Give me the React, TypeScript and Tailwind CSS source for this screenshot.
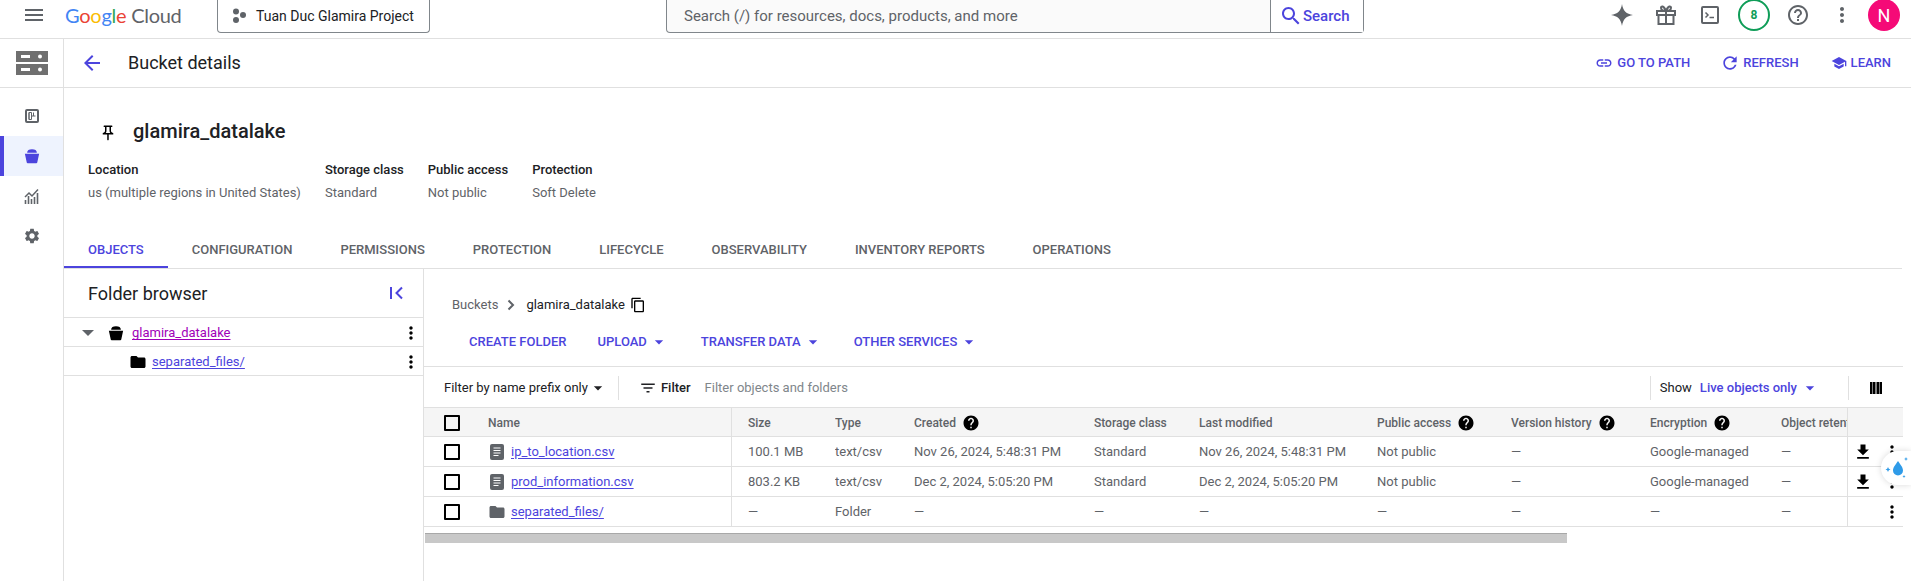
import type { ReactNode } from 'react'

const P = {
  menu: 'M3 18h18v-2H3v2zm0-5h18v-2H3v2zm0-7v2h18V6H3z',
  back: 'M20 11H7.83l5.59-5.59L12 4l-8 8 8 8 1.41-1.41L7.83 13H20v-2z',
  link: 'M3.9 12c0-1.71 1.39-3.1 3.1-3.1h4V7H7c-2.76 0-5 2.24-5 5s2.24 5 5 5h4v-1.9H7c-1.71 0-3.1-1.39-3.1-3.1zM8 13h8v-2H8v2zm9-6h-4v1.9h4c1.71 0 3.1 1.39 3.1 3.1s-1.39 3.1-3.1 3.1h-4V17h4c2.76 0 5-2.24 5-5s-2.24-5-5-5z',
  refresh: 'M17.65 6.35C16.2 4.9 14.21 4 12 4c-4.42 0-7.99 3.58-7.99 8s3.57 8 7.99 8c3.73 0 6.84-2.55 7.73-6h-2.08c-.82 2.33-3.04 4-5.65 4-3.31 0-6-2.69-6-6s2.69-6 6-6c1.66 0 3.14.69 4.22 1.78L13 11h7V4l-2.35 2.35z',
  school: 'M5 13.18v4L12 21l7-3.82v-4L12 17l-7-3.82zM12 3L1 9l11 6 9-4.91V17h2V9L12 3z',
  search: 'M15.5 14h-.79l-.28-.27C15.41 12.59 16 11.11 16 9.5 16 5.91 13.09 3 9.5 3S3 5.91 3 9.5 5.91 16 9.5 16c1.61 0 3.09-.59 4.23-1.57l.27.28v.79l5 4.99L20.49 19l-4.99-5zm-6 0C7.01 14 5 11.99 5 9.5S7.01 5 9.5 5 14 7.01 14 9.5 11.99 14 9.5 14z',
  helpOutline: 'M11 18h2v-2h-2v2zm1-16C6.48 2 2 6.48 2 12s4.48 10 10 10 10-4.48 10-10S17.52 2 12 2zm0 18c-4.41 0-8-3.59-8-8s3.59-8 8-8 8 3.59 8 8-3.59 8-8 8zm0-14c-2.21 0-4 1.79-4 4h2c0-1.1.9-2 2-2s2 .9 2 2c0 2-3 1.75-3 5h2c0-2.25 3-2.5 3-5 0-2.21-1.79-4-4-4z',
  help: 'M12 2C6.48 2 2 6.48 2 12s4.48 10 10 10 10-4.48 10-10S17.52 2 12 2zm1 17h-2v-2h2v2zm2.07-7.75l-.9.92C13.45 12.9 13 13.5 13 15h-2v-.5c0-1.1.45-2.1 1.17-2.83l1.24-1.26c.37-.36.59-.86.59-1.41 0-1.1-.9-2-2-2s-2 .9-2 2H8c0-2.21 1.79-4 4-4s4 1.79 4 4c0 .88-.36 1.68-.93 2.25z',
  more: 'M12 8c1.1 0 2-.9 2-2s-.9-2-2-2-2 .9-2 2 .9 2 2 2zm0 2c-1.1 0-2 .9-2 2s.9 2 2 2 2-.9 2-2-.9-2-2-2zm0 6c-1.1 0-2 .9-2 2s.9 2 2 2 2-.9 2-2-.9-2-2-2z',
  folder: 'M10 4H4c-1.1 0-1.99.9-1.99 2L2 18c0 1.1.9 2 2 2h16c1.1 0 2-.9 2-2V8c0-1.1-.9-2-2-2h-8l-2-2z',
  download: 'M19 9h-4V3H9v6H5l7 7 7-7zM5 18v2h14v-2H5z',
  filter: 'M10 18h4v-2h-4v2zM3 6v2h18V6H3zm3 7h12v-2H6v2z',
  copy: 'M16 1H4c-1.1 0-2 .9-2 2v14h2V3h12V1zm3 4H8c-1.1 0-2 .9-2 2v14c0 1.1.9 2 2 2h11c1.1 0 2-.9 2-2V7c0-1.1-.9-2-2-2zm0 16H8V7h11v14z',
  pin: 'M14 4v5c0 1.12.37 2.16 1 3H9c.65-.86 1-1.9 1-3V4h4m3-2H7c-.55 0-1 .45-1 1s.45 1 1 1h1v5c0 1.66-1.34 3-3 3v2h5.97v7l1 1 1-1v-7H19v-2c-1.66 0-3-1.34-3-3V4h1c.55 0 1-.45 1-1s-.45-1-1-1z',
  settings: 'M19.14 12.94c.04-.3.06-.61.06-.94 0-.32-.02-.64-.07-.94l2.03-1.58c.18-.14.23-.41.12-.61l-1.92-3.32c-.12-.22-.37-.29-.59-.22l-2.39.96c-.5-.38-1.03-.7-1.62-.94l-.36-2.54c-.04-.24-.24-.41-.48-.41h-3.84c-.24 0-.43.17-.47.41l-.36 2.54c-.59.24-1.13.57-1.62.94l-2.39-.96c-.22-.08-.47 0-.59.22L2.74 8.87c-.12.21-.08.47.12.61l2.03 1.58c-.05.3-.09.63-.09.94s.02.64.07.94l-2.03 1.58c-.18.14-.23.41-.12.61l1.92 3.32c.12.22.37.29.59.22l2.39-.96c.5.38 1.03.7 1.62.94l.36 2.54c.05.24.24.41.48.41h3.84c.24 0 .44-.17.47-.41l.36-2.54c.59-.24 1.13-.56 1.62-.94l2.39.96c.22.08.47 0 .59-.22l1.92-3.32c.12-.22.07-.47-.12-.61l-2.01-1.58zM12 15.6c-1.98 0-3.6-1.62-3.6-3.6s1.62-3.6 3.6-3.6 3.6 1.62 3.6 3.6-1.62 3.6-3.6 3.6z',
  bucket: 'M5.500 7.500C5.500 4.500 8 3 12 3s6.500 1.500 6.500 4.500H5.500zM2.500 9h19L19 20.500c-.1.6-.6 1-1.200 1H6.200c-.6 0-1.100-.4-1.200-1L2.500 9z',
  caret: 'M7 10l5 5 5-5H7z',
}

function Ic({ d, size = 18, className = '' }: { d: string; size?: number; className?: string }) {
  return (
    <svg width={size} height={size} viewBox="0 0 24 24" fill="currentColor" className={`shrink-0 ${className}`}>
      <path d={d} />
    </svg>
  )
}

function Checkbox() {
  return <span className="block h-[16px] w-[16px] rounded-[1px] border-2 border-black" />
}

function DocIcon() {
  return (
    <svg width="18" height="18" viewBox="0 0 18 18" className="shrink-0">
      <rect x="2" y="1" width="14" height="16" rx="2" fill="#5f6368" />
      <path d="M5.500 5h7M5.500 7.500h7M5.500 10h7M5.500 12.500h5" stroke="#fff" strokeWidth="1.200" />
    </svg>
  )
}

function Header() {
  const logo: [string, string][] = [['G', 'text-[#4285f4]'], ['o', 'text-[#ea4335]'], ['o', 'text-[#fbbc04]'], ['g', 'text-[#4285f4]'], ['l', 'text-[#34a853]'], ['e', 'text-[#ea4335]']]
  return (
    <header className="flex h-[39px] items-start border-b border-[#e0e0e0] bg-white">
      <Ic d={P.menu} size={24} className="ml-[22px] mt-[3px] text-[#5f6368]" />
      <div className="ml-[19px] flex h-[30px] w-[116px] items-center whitespace-nowrap font-['Lato',sans-serif] text-[20px] leading-none tracking-[-0.3px]">
        {logo.map(([c, cls], i) => (
          <span key={i} className={cls}>{c}</span>
        ))}
        <span className="ml-[5px] text-[#5f6368]">Cloud</span>
      </div>
      <div className="ml-[36px] flex h-[33px] w-[213px] items-center rounded-b-[4px] border-x border-b border-[#80868b]">
        <svg width="16" height="16" viewBox="0 0 16 16" className="ml-[13px] text-[#5f6368]" fill="currentColor">
          <circle cx="5" cy="3.500" r="3" /><circle cx="12" cy="7" r="3" /><circle cx="5" cy="12" r="3" />
        </svg>
        <span className="ml-[9px] text-[14px] text-[#202124]">Tuan Duc Glamira Project</span>
      </div>
      <div className="ml-[236px] flex h-[33px] w-[698px] items-center rounded-b-[4px] border-x border-b border-[#80868b] bg-[#fafafa]">
        <span className="flex-1 pl-[17px] text-[15px] text-[#5f6368]">Search (/) for resources, docs, products, and more</span>
        <div className="flex h-full w-[93px] items-center border-l border-[#80868b] bg-white pl-[9px] text-[#4c44dd]">
          <Ic d={P.search} size={24} className="-ml-px" />
          <span className="text-[15px] font-medium">Search</span>
        </div>
      </div>
      <div className="ml-auto flex h-[30px] items-center pr-[11px] text-[#5f6368]">
        <div className="flex w-[44px] justify-center">
          <svg width="24" height="24" viewBox="0 0 24 24" fill="currentColor"><path d="M12 1c.8 6.500 4.500 10.200 11 11-6.500.8-10.200 4.500-11 11-.8-6.500-4.500-10.200-11-11 6.500-.8 10.200-4.500 11-11z" /></svg>
        </div>
        <div className="flex w-[44px] justify-center">
          <svg width="24" height="24" viewBox="0 0 24 24" fill="none" stroke="currentColor" strokeWidth="2">
            <path d="M3 8h18v4H3zM4.500 12v9h15v-9M12 8v13M12 8C9 8 7 7 7 4.800 7 3 9.500 2 12 8c2.500-6 5-5 5-3.200C17 7 15 8 12 8z" />
          </svg>
        </div>
        <div className="flex w-[44px] justify-center">
          <svg width="20" height="20" viewBox="0 0 20 20" fill="none" stroke="currentColor" strokeWidth="2">
            <rect x="2" y="2" width="16" height="16" rx="1" />
            <path d="M5.500 7.500L8 10l-2.500 2.500M9.500 12.500H14" strokeWidth="1.500" />
          </svg>
        </div>
        <div className="flex w-[44px] justify-center">
          <span className="flex h-[32px] w-[32px] items-center justify-center rounded-full border-2 border-[#0f9d58] text-[12px] font-bold text-[#0f9d58]">8</span>
        </div>
        <div className="flex w-[44px] justify-center"><Ic d={P.helpOutline} size={24} /></div>
        <div className="flex w-[44px] justify-center"><Ic d={P.more} size={24} /></div>
        <div className="ml-[4px] flex h-[32px] w-[32px] items-center justify-center rounded-full bg-[#f50a77] text-[18px] text-white">N</div>
      </div>
    </header>
  )
}

function Sidebar() {
  return (
    <aside className="w-[64px] shrink-0 border-r border-[#e0e0e0] text-[#5f6368]">
      <div className="flex h-[49px] items-center justify-center border-b border-[#e0e0e0]">
        <svg width="32" height="24" viewBox="0 0 32 24">
          <rect width="32" height="11" fill="#6f6f6f" /><rect y="13" width="32" height="11" fill="#6f6f6f" />
          <rect x="5" y="4" width="9" height="3" fill="#fff" /><circle cx="24" cy="5.500" r="2" fill="#fff" />
          <rect x="5" y="17" width="9" height="3" fill="#fff" /><circle cx="24" cy="18.500" r="2" fill="#fff" />
        </svg>
      </div>
      <nav className="pt-[8px]">
        <div className="flex h-10 items-center justify-center">
          <svg width="14" height="14" viewBox="0 0 14 14" fill="none" stroke="currentColor">
            <rect x="1" y="1" width="12" height="12" rx="1" strokeWidth="2" />
            <path d="M4 3.500v7M4 3.500h2.500v7H4zM6.500 7H10.500M8.500 3.500v3.500" strokeWidth="1" />
          </svg>
        </div>
        <div className="flex h-10 items-center justify-center border-l-4 border-[#4c44dd] bg-[#eef3fe] pr-1 text-[#4c44dd]">
          <Ic d={P.bucket} size={18} />
        </div>
        <div className="flex h-10 items-center justify-center">
          <svg width="16" height="16" viewBox="0 0 16 16" fill="none" stroke="currentColor">
            <path d="M1 9l4-4 3 3 6-6.500" strokeWidth="1.500" />
            <path d="M1.500 16v-4M4.500 16V8M7.500 16v-5M10.500 16V9M13.500 16V5" strokeWidth="1.600" />
          </svg>
        </div>
        <div className="flex h-10 items-center justify-center"><Ic d={P.settings} size={18} /></div>
      </nav>
    </aside>
  )
}

function TitleBar() {
  return (
    <div className="flex h-[49px] items-center border-b border-[#e0e0e0] pl-4 pr-[20px]">
      <Ic d={P.back} size={24} className="text-[#4c44dd]" />
      <h1 className="-mt-px ml-[24px] text-[18px] text-[#202124]">Bucket details</h1>
      <div className="ml-auto flex items-center text-[13px] font-medium text-[#4c44dd]">
        <Ic d={P.link} size={18} />
        <span className="ml-1">GO TO PATH</span>
        <Ic d={P.refresh} size={20} className="ml-[30px]" />
        <span className="ml-[3px]">REFRESH</span>
        <Ic d={P.school} size={16} className="ml-[32px]" />
        <span className="ml-1">LEARN</span>
      </div>
    </div>
  )
}

const META = [
  ['Location', 'us (multiple regions in United States)'],
  ['Storage class', 'Standard'],
  ['Public access', 'Not public'],
  ['Protection', 'Soft Delete'],
]

const TABS = ['OBJECTS', 'CONFIGURATION', 'PERMISSIONS', 'PROTECTION', 'LIFECYCLE', 'OBSERVABILITY', 'INVENTORY REPORTS', 'OPERATIONS']

function BucketInfo() {
  return (
    <>
      <div className="mt-[29px] flex h-[28px] items-center pl-[35px]">
        <Ic d={P.pin} size={18} className="mt-[3px] text-black" />
        <h2 className="ml-[16px] text-[20px] font-medium text-[#202124]">glamira_datalake</h2>
      </div>
      <div className="ml-6 mt-[15px] flex gap-6 text-[13px] leading-[20px]">
        {META.map(([label, value]) => (
          <div key={label}>
            <div className="font-medium text-[#202124]">{label}</div>
            <div className="mt-[3px] text-[#5f6368]">{value}</div>
          </div>
        ))}
      </div>
      <div className="mr-[9px] mt-[29px] flex h-[37px] border-b border-[#e0e0e0]">
        {TABS.map((t, i) => (
          <div
            key={t}
            className={`flex h-[36px] items-center border-b-2 px-6 pt-[2px] text-[13px] font-medium ${
              i === 0 ? 'border-[#4c44dd] text-[#4c44dd]' : 'border-transparent text-[#5f6368]'
            }`}
          >
            {t}
          </div>
        ))}
      </div>
    </>
  )
}

function FolderBrowser() {
  return (
    <div className="w-[360px] shrink-0 border-r border-[#e0e0e0]">
      <div className="flex h-[49px] items-center justify-between border-b border-[#e0e0e0] pl-6 pr-[17px]">
        <span className="text-[18px] text-[#202124]">Folder browser</span>
        <svg width="18" height="18" viewBox="0 0 18 18" fill="none" stroke="#4c44dd" strokeWidth="2">
          <path d="M3 3v12M14 3.500L8.500 9l5.500 5.500" />
        </svg>
      </div>
      <div className="flex h-[29px] items-center border-b border-[#e0e0e0] pt-[2px] text-[13px]">
        <svg width="12" height="8" viewBox="0 0 12 8" className="ml-[18px] text-[#5f6368]" fill="currentColor"><path d="M0 1h12L6 7z" /></svg>
        <Ic d={P.bucket} size={18} className="ml-[13px] text-black" />
        <span className="ml-[7px] text-[#a000b8] underline underline-offset-2">glamira_datalake</span>
        <Ic d={P.more} size={20} className="ml-auto mr-[2px] text-black" />
      </div>
      <div className="flex h-[29px] items-center border-b border-[#e0e0e0] pt-[2px] text-[13px]">
        <Ic d={P.folder} size={18} className="ml-[65px] text-black" />
        <span className="ml-[5px] text-[#4c44dd] underline underline-offset-2">separated_files/</span>
        <Ic d={P.more} size={20} className="ml-auto mr-[2px] text-black" />
      </div>
    </div>
  )
}

function Action({ label, caret, className }: { label: string; caret?: boolean; className: string }) {
  return (
    <div className={`flex items-center text-[13px] font-medium text-[#4c44dd] ${className}`}>
      {label}
      {caret && <Ic d={P.caret} size={20} className="ml-[2px]" />}
    </div>
  )
}

const GRID = 'grid grid-cols-[64px_244px_103px_79px_180px_105px_178px_134px_139px_131px_66px_56px]'

function Th({ children, help, className = '' }: { children?: ReactNode; help?: boolean; className?: string }) {
  return (
    <div className={`flex items-center overflow-hidden whitespace-nowrap ${className}`}>
      {children}
      {help && <Ic d={P.help} size={18} className="ml-[6px] text-black" />}
    </div>
  )
}

const ROWS = [
  { name: 'ip_to_location.csv', size: '100.1 MB', type: 'text/csv', created: 'Nov 26, 2024, 5:48:31 PM', cls: 'Standard', mod: 'Nov 26, 2024, 5:48:31 PM', pub: 'Not public', ver: '—', enc: 'Google-managed', ret: '—', file: true },
  { name: 'prod_information.csv', size: '803.2 KB', type: 'text/csv', created: 'Dec 2, 2024, 5:05:20 PM', cls: 'Standard', mod: 'Dec 2, 2024, 5:05:20 PM', pub: 'Not public', ver: '—', enc: 'Google-managed', ret: '—', file: true },
  { name: 'separated_files/', size: '—', type: 'Folder', created: '—', cls: '—', mod: '—', pub: '—', ver: '—', enc: '—', ret: '—', file: false },
]

function ObjectsTable() {
  return (
    <div className="text-[13px] text-[#5f6368]">
      <div className={`${GRID} h-[30px] border-y border-[#e0e0e0] bg-[#f5f5f5] text-[12px] font-medium [&>div]:pt-[2px]`}>
        <Th className="pl-5"><Checkbox /></Th>
        <Th className="border-r border-[#e0e0e0]">Name</Th>
        <Th className="pl-4">Size</Th>
        <Th>Type</Th>
        <Th help>Created</Th>
        <Th>Storage class</Th>
        <Th>Last modified</Th>
        <Th help>Public access</Th>
        <Th help>Version history</Th>
        <Th help>Encryption</Th>
        <Th>Object retention</Th>
        <Th className="border-l border-[#e0e0e0]" />
      </div>
      {ROWS.map((r) => (
        <div key={r.name} className={`${GRID} h-[30px] border-b border-[#e0e0e0]`}>
          <Th className="pl-5"><Checkbox /></Th>
          <Th className="border-r border-[#e0e0e0]">
            {r.file ? <DocIcon /> : <Ic d={P.folder} size={18} className="text-[#5f6368]" />}
            <span className="ml-[5px] text-[#4c44dd] underline underline-offset-2">{r.name}</span>
          </Th>
          <Th className="pl-4">{r.size}</Th>
          <Th>{r.type}</Th>
          <Th>{r.created}</Th>
          <Th>{r.cls}</Th>
          <Th>{r.mod}</Th>
          <Th>{r.pub}</Th>
          <Th>{r.ver}</Th>
          <Th>{r.enc}</Th>
          <Th>{r.ret}</Th>
          <Th className="border-l border-[#e0e0e0] text-black">
            {r.file && <Ic d={P.download} size={20} className="ml-[5px]" />}
            <Ic d={P.more} size={20} className="ml-auto mr-[1px]" />
          </Th>
        </div>
      ))}
    </div>
  )
}

function ObjectsPanel() {
  return (
    <div className="min-w-0 flex-1">
      <div className="ml-[28px] mt-[26px] flex h-5 items-center text-[13px]">
        <span className="text-[#5f6368]">Buckets</span>
        <svg width="8" height="12" viewBox="0 0 8 12" fill="none" stroke="#5f6368" strokeWidth="2" className="ml-[9px]"><path d="M1.500 1.500L6 6l-4.500 4.500" /></svg>
        <span className="ml-[11px] text-[#202124]">glamira_datalake</span>
        <Ic d={P.copy} size={16} className="ml-[5px] text-black" />
      </div>
      <div className="mt-[12px] flex h-[30px] items-center pl-[45px]">
        <Action label="CREATE FOLDER" className="" />
        <Action label="UPLOAD" caret className="ml-[31px]" />
        <Action label="TRANSFER DATA" caret className="ml-[32px]" />
        <Action label="OTHER SERVICES" caret className="ml-[31px]" />
      </div>
      <div className="mr-[8px] mt-[9px]">
        <div className="flex h-[41px] items-center border-t border-[#e0e0e0] pl-5 pr-[21px] pt-[2px] text-[13px] text-[#202124]">
          <span>Filter by name prefix only</span>
          <Ic d={P.caret} size={20} className="text-[#202124]" />
          <span className="ml-[10px] h-[24px] w-px bg-[#e0e0e0]" />
          <Ic d={P.filter} size={18} className="ml-[20px]" />
          <span className="ml-1 font-medium">Filter</span>
          <span className="ml-[14px] text-[#80868b]">Filter objects and folders</span>
          <span className="ml-auto h-[24px] w-px bg-[#e0e0e0]" />
          <span className="ml-[9px]">Show</span>
          <span className="ml-[8px] font-medium text-[#4c44dd]">Live objects only</span>
          <Ic d={P.caret} size={20} className="ml-[3px] text-[#4c44dd]" />
          <span className="ml-[28px] h-[24px] w-px bg-[#e0e0e0]" />
          <svg width="12" height="14" viewBox="0 0 12 14" fill="#000" className="ml-[21px]">
            <path d="M0 1h2.500v12H0zM3 1h2.500v12H3zM6.500 1H9v12H6.500zM9.500 1H12v12H9.500z" />
          </svg>
        </div>
        <ObjectsTable />
        <div className="ml-px mt-[6px] h-[10px] w-[1142px] border-t border-[#a8a8a8] bg-[#c8c8c8]" />
      </div>
    </div>
  )
}

export default function App() {
  return (
    <div className="relative h-[581px] w-[1911px] overflow-hidden bg-white font-['Roboto',sans-serif]">
      <Header />
      <div className="flex h-[542px]">
        <Sidebar />
        <main className="min-w-0 flex-1">
          <TitleBar />
          <BucketInfo />
          <div className="flex h-[312px]">
            <FolderBrowser />
            <ObjectsPanel />
          </div>
        </main>
      </div>
      <div className="absolute right-0 top-[451px] flex h-[34px] w-[30px] items-center justify-center rounded-l-full bg-white shadow-[0_0_6px_rgba(0,0,0,0.15)]">
        <svg width="26" height="26" viewBox="0 0 26 26" fill="#2f9be8">
          <path d="M15 6c3 4.500 5 6.500 5 9.500a5 5 0 0 1-10 0C10 12.500 12 10.500 15 6z" />
          <path d="M5 12l.8 1.700 1.700.8-1.700.8L5 17l-.8-1.700-1.700-.8 1.700-.8zM23 2l.6 1.400L25 4l-1.400.6L23 6l-.6-1.400L21 4l1.400-.6zM21 20l.5 1 1 .5-1 .5-.5 1-.5-1-1-.5 1-.5z" />
        </svg>
      </div>
    </div>
  )
}
